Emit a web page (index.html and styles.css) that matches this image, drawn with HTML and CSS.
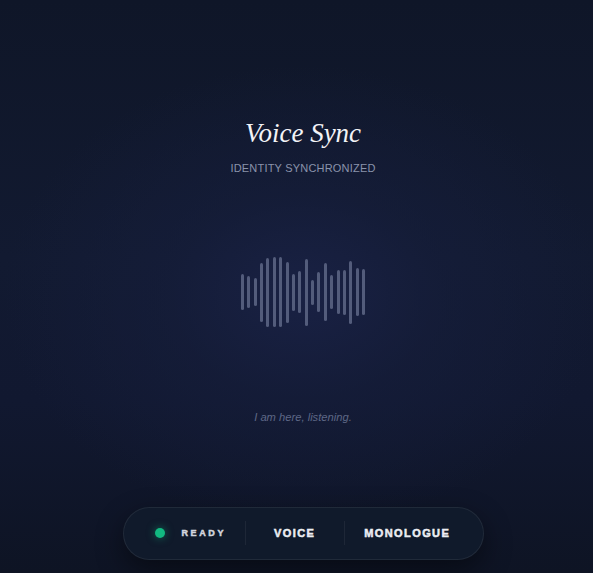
FILE: index.html
```html
<!DOCTYPE html>
<html lang="en">
<head>
<meta charset="utf-8">
<title>Voice Sync</title>
<link rel="stylesheet" href="styles.css">
</head>
<body>
<main class="stage">
  <h1 class="title">Voice Sync</h1>
  <p class="subtitle">IDENTITY SYNCHRONIZED</p>
  <div class="wave">
    <span class="bar" style="height:36px"></span>
    <span class="bar" style="height:32px"></span>
    <span class="bar" style="height:28px"></span>
    <span class="bar" style="height:59px"></span>
    <span class="bar" style="height:69px"></span>
    <span class="bar" style="height:70px"></span>
    <span class="bar" style="height:70px"></span>
    <span class="bar" style="height:61px"></span>
    <span class="bar" style="height:37px"></span>
    <span class="bar" style="height:42px"></span>
    <span class="bar" style="height:67px"></span>
    <span class="bar" style="height:25px"></span>
    <span class="bar" style="height:40px"></span>
    <span class="bar" style="height:58px"></span>
    <span class="bar" style="height:34px"></span>
    <span class="bar" style="height:44px"></span>
    <span class="bar" style="height:45px"></span>
    <span class="bar" style="height:63px"></span>
    <span class="bar" style="height:48px"></span>
    <span class="bar" style="height:46px"></span>
  </div>
  <p class="quote">I am here, listening.</p>
  <nav class="pill">
    <span class="dot"></span>
    <span class="status">READY</span>
    <span class="divider"></span>
    <button class="mode mode-voice">VOICE</button>
    <span class="divider divider-2"></span>
    <button class="mode mode-mono">MONOLOGUE</button>
  </nav>
</main>
</body>
</html>
```

FILE: styles.css
```css
html, body {
  margin: 0;
  padding: 0;
}
body {
  width: 593px;
  height: 573px;
  overflow: hidden;
  background:
    radial-gradient(ellipse 300px 230px at 303px 295px, rgba(26, 34, 70, 0.9) 0%, rgba(22, 30, 60, 0.6) 45%, rgba(18, 25, 48, 0) 100%),
    linear-gradient(180deg, #0f1628 0%, #121a31 45%, #111830 70%, #0e1424 100%);
  font-family: "Liberation Sans", Arial, sans-serif;
}
.stage {
  height: 573px;
  box-sizing: border-box;
  padding-left: 13px;
  display: flex;
  flex-direction: column;
  align-items: center;
}
.title {
  margin: 117px 0 0;
  font-family: "Liberation Serif", "Times New Roman", serif;
  font-style: italic;
  font-weight: 400;
  font-size: 27px;
  line-height: 32px;
  color: #f2f3f7;
}
.subtitle {
  margin: 12px 0 0;
  font-size: 11px;
  line-height: 14px;
  letter-spacing: 0.2px;
  color: #8a93ab;
}
.wave {
  margin-top: 81px;
  height: 72px;
  display: flex;
  align-items: center;
  gap: 3.4px;
}
.bar {
  display: block;
  width: 3px;
  border-radius: 2px;
  background: #535c7b;
}
.quote {
  margin: 82px 0 0;
  font-style: italic;
  font-size: 11.2px;
  line-height: 14px;
  color: #5e6886;
}
.pill {
  margin-top: 83px;
  width: 361px;
  height: 53px;
  box-sizing: border-box;
  border: 1px solid rgba(255, 255, 255, 0.07);
  border-radius: 27px;
  background: #101a2b;
  box-shadow: 0 10px 28px rgba(0, 0, 0, 0.45);
  display: flex;
  align-items: center;
  padding: 0 0 2px 31px;
}
.dot {
  width: 10px;
  height: 10px;
  border-radius: 50%;
  background: #12b981;
  box-shadow: 0 0 8px rgba(16, 185, 129, 0.55);
}
.status {
  margin-left: 17px;
  font-size: 9px;
  font-weight: 700;
  letter-spacing: 2.6px;
  color: #d3d6de;
  -webkit-text-stroke: 0.5px currentColor;
}
.divider {
  width: 1px;
  height: 24px;
  margin-left: 19px;
  background: rgba(255, 255, 255, 0.06);
}
.mode {
  border: 0;
  background: none;
  padding: 0;
  font-family: "Liberation Sans", Arial, sans-serif;
  font-size: 11px;
  font-weight: 700;
  letter-spacing: 1.4px;
  color: #eceef3;
  -webkit-text-stroke: 0.5px currentColor;
}
.mode-voice {
  margin-left: 28px;
}
.divider-2 {
  margin-left: 29px;
}
.mode-mono {
  margin-left: 19px;
}
```
